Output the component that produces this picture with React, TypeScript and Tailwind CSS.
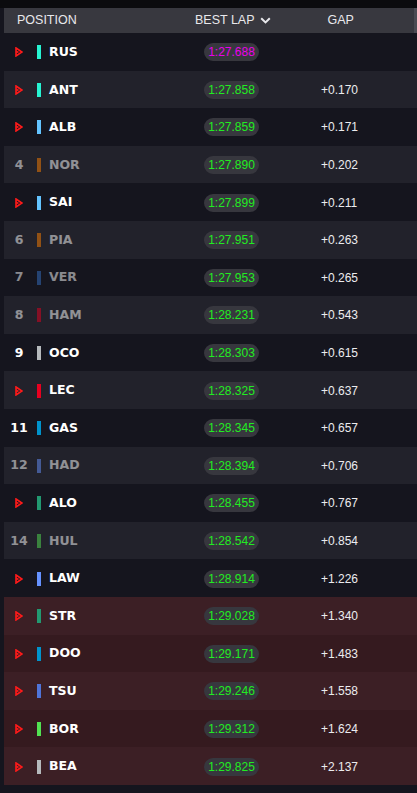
import React from "react";

type Row = {
  pos: number;
  code: string;
  color: string;
  lap: string;
  gap: string;
  faded?: boolean;
  showPos?: boolean;
  danger?: boolean;
};

const rows: Row[] = [
  { pos: 1, code: "RUS", color: "#27f4d2", lap: "1:27.688", gap: "" },
  { pos: 2, code: "ANT", color: "#27f4d2", lap: "1:27.858", gap: "+0.170" },
  { pos: 3, code: "ALB", color: "#64c4ff", lap: "1:27.859", gap: "+0.171" },
  { pos: 4, code: "NOR", color: "#ff8000", lap: "1:27.890", gap: "+0.202", faded: true, showPos: true },
  { pos: 5, code: "SAI", color: "#64c4ff", lap: "1:27.899", gap: "+0.211" },
  { pos: 6, code: "PIA", color: "#ff8000", lap: "1:27.951", gap: "+0.263", faded: true, showPos: true },
  { pos: 7, code: "VER", color: "#3671c6", lap: "1:27.953", gap: "+0.265", faded: true, showPos: true },
  { pos: 8, code: "HAM", color: "#e80020", lap: "1:28.231", gap: "+0.543", faded: true, showPos: true },
  { pos: 9, code: "OCO", color: "#b6babd", lap: "1:28.303", gap: "+0.615", showPos: true },
  { pos: 10, code: "LEC", color: "#e80020", lap: "1:28.325", gap: "+0.637" },
  { pos: 11, code: "GAS", color: "#0093cc", lap: "1:28.345", gap: "+0.657", showPos: true },
  { pos: 12, code: "HAD", color: "#6692ff", lap: "1:28.394", gap: "+0.706", faded: true, showPos: true },
  { pos: 13, code: "ALO", color: "#229971", lap: "1:28.455", gap: "+0.767" },
  { pos: 14, code: "HUL", color: "#52e252", lap: "1:28.542", gap: "+0.854", faded: true, showPos: true },
  { pos: 15, code: "LAW", color: "#6692ff", lap: "1:28.914", gap: "+1.226" },
  { pos: 16, code: "STR", color: "#229971", lap: "1:29.028", gap: "+1.340", danger: true },
  { pos: 17, code: "DOO", color: "#0093cc", lap: "1:29.171", gap: "+1.483", danger: true },
  { pos: 18, code: "TSU", color: "#4f74d9", lap: "1:29.246", gap: "+1.558", danger: true },
  { pos: 19, code: "BOR", color: "#52e252", lap: "1:29.312", gap: "+1.624", danger: true },
  { pos: 20, code: "BEA", color: "#b6babd", lap: "1:29.825", gap: "+2.137", danger: true },
];

const PlayMark = () => (
  <svg width="8" height="10" viewBox="0 0 8 10">
    <path d="M1 1 L7 5 L1 9 Z" fill="none" stroke="#ff1a1a" strokeWidth="1.6" strokeLinejoin="miter" />
    <path d="M1 4 L3 5 L1 6" fill="none" stroke="#ff1a1a" strokeWidth="1.2" />
  </svg>
);

const rowBg = (r: Row, i: number) => {
  if (r.danger) return i % 2 === 1 ? "bg-[#3c1f25]" : "bg-[#351a1f]";
  return i % 2 === 0 ? "bg-[#15151e]" : "bg-[#22222b]";
};

export default function App() {
  return (
    <div
      className="w-[417px] h-[793px] bg-[#15151e] overflow-hidden"
      style={{ fontFamily: '"Liberation Sans", Arial, sans-serif' }}
    >
      <div className="h-[8px] bg-[#0b0b0e]" />
      <div className="pl-[4px]">
        {/* Header */}
        <div className="h-[25px] bg-[#38383f] flex items-center text-[12.5px] text-[#e8e8ec] border-r-[3px] border-[#4a4a52]">
          <span className="pl-[13px] w-[191px]">POSITION</span>
          <span className="flex items-center gap-[5px]">
            BEST LAP
            <svg width="11" height="7" viewBox="0 0 11 7">
              <path d="M1.2 1.2 L5.5 5.4 L9.8 1.2" fill="none" stroke="#e8e8ec" strokeWidth="2" />
            </svg>
          </span>
          <span className="ml-[57px]">GAP</span>
        </div>

        {/* Rows */}
        {rows.map((r, i) => (
          <div key={r.code} className={`h-[37.6px] pt-[1px] flex items-center ${rowBg(r, i)}`}>
            <div
              className={`flex items-center w-[200px] ${r.faded ? "opacity-50" : ""}`}
              style={{ fontFamily: '"DejaVu Sans", sans-serif' }}
            >
              <div className="ml-[7px] w-[16px] flex justify-center text-[12.5px] font-bold text-white">
                {r.showPos ? r.pos : <PlayMark />}
              </div>
              <div className="ml-[10px] w-[4px] h-[14px]" style={{ backgroundColor: r.color }} />
              <span className="ml-[8px] text-[12.5px] font-bold text-white">{r.code}</span>
            </div>
            <div className="w-[55px] h-[18px] rounded-full bg-[#37373e] flex items-center justify-center">
              <span className={`text-[12px] ${i === 0 ? "text-[#ea00ea]" : "text-[#22ec22]"}`}>{r.lap}</span>
            </div>
            <span className="ml-[62px] text-[12px] text-[#ececef]">{r.gap}</span>
          </div>
        ))}
      </div>
    </div>
  );
}
